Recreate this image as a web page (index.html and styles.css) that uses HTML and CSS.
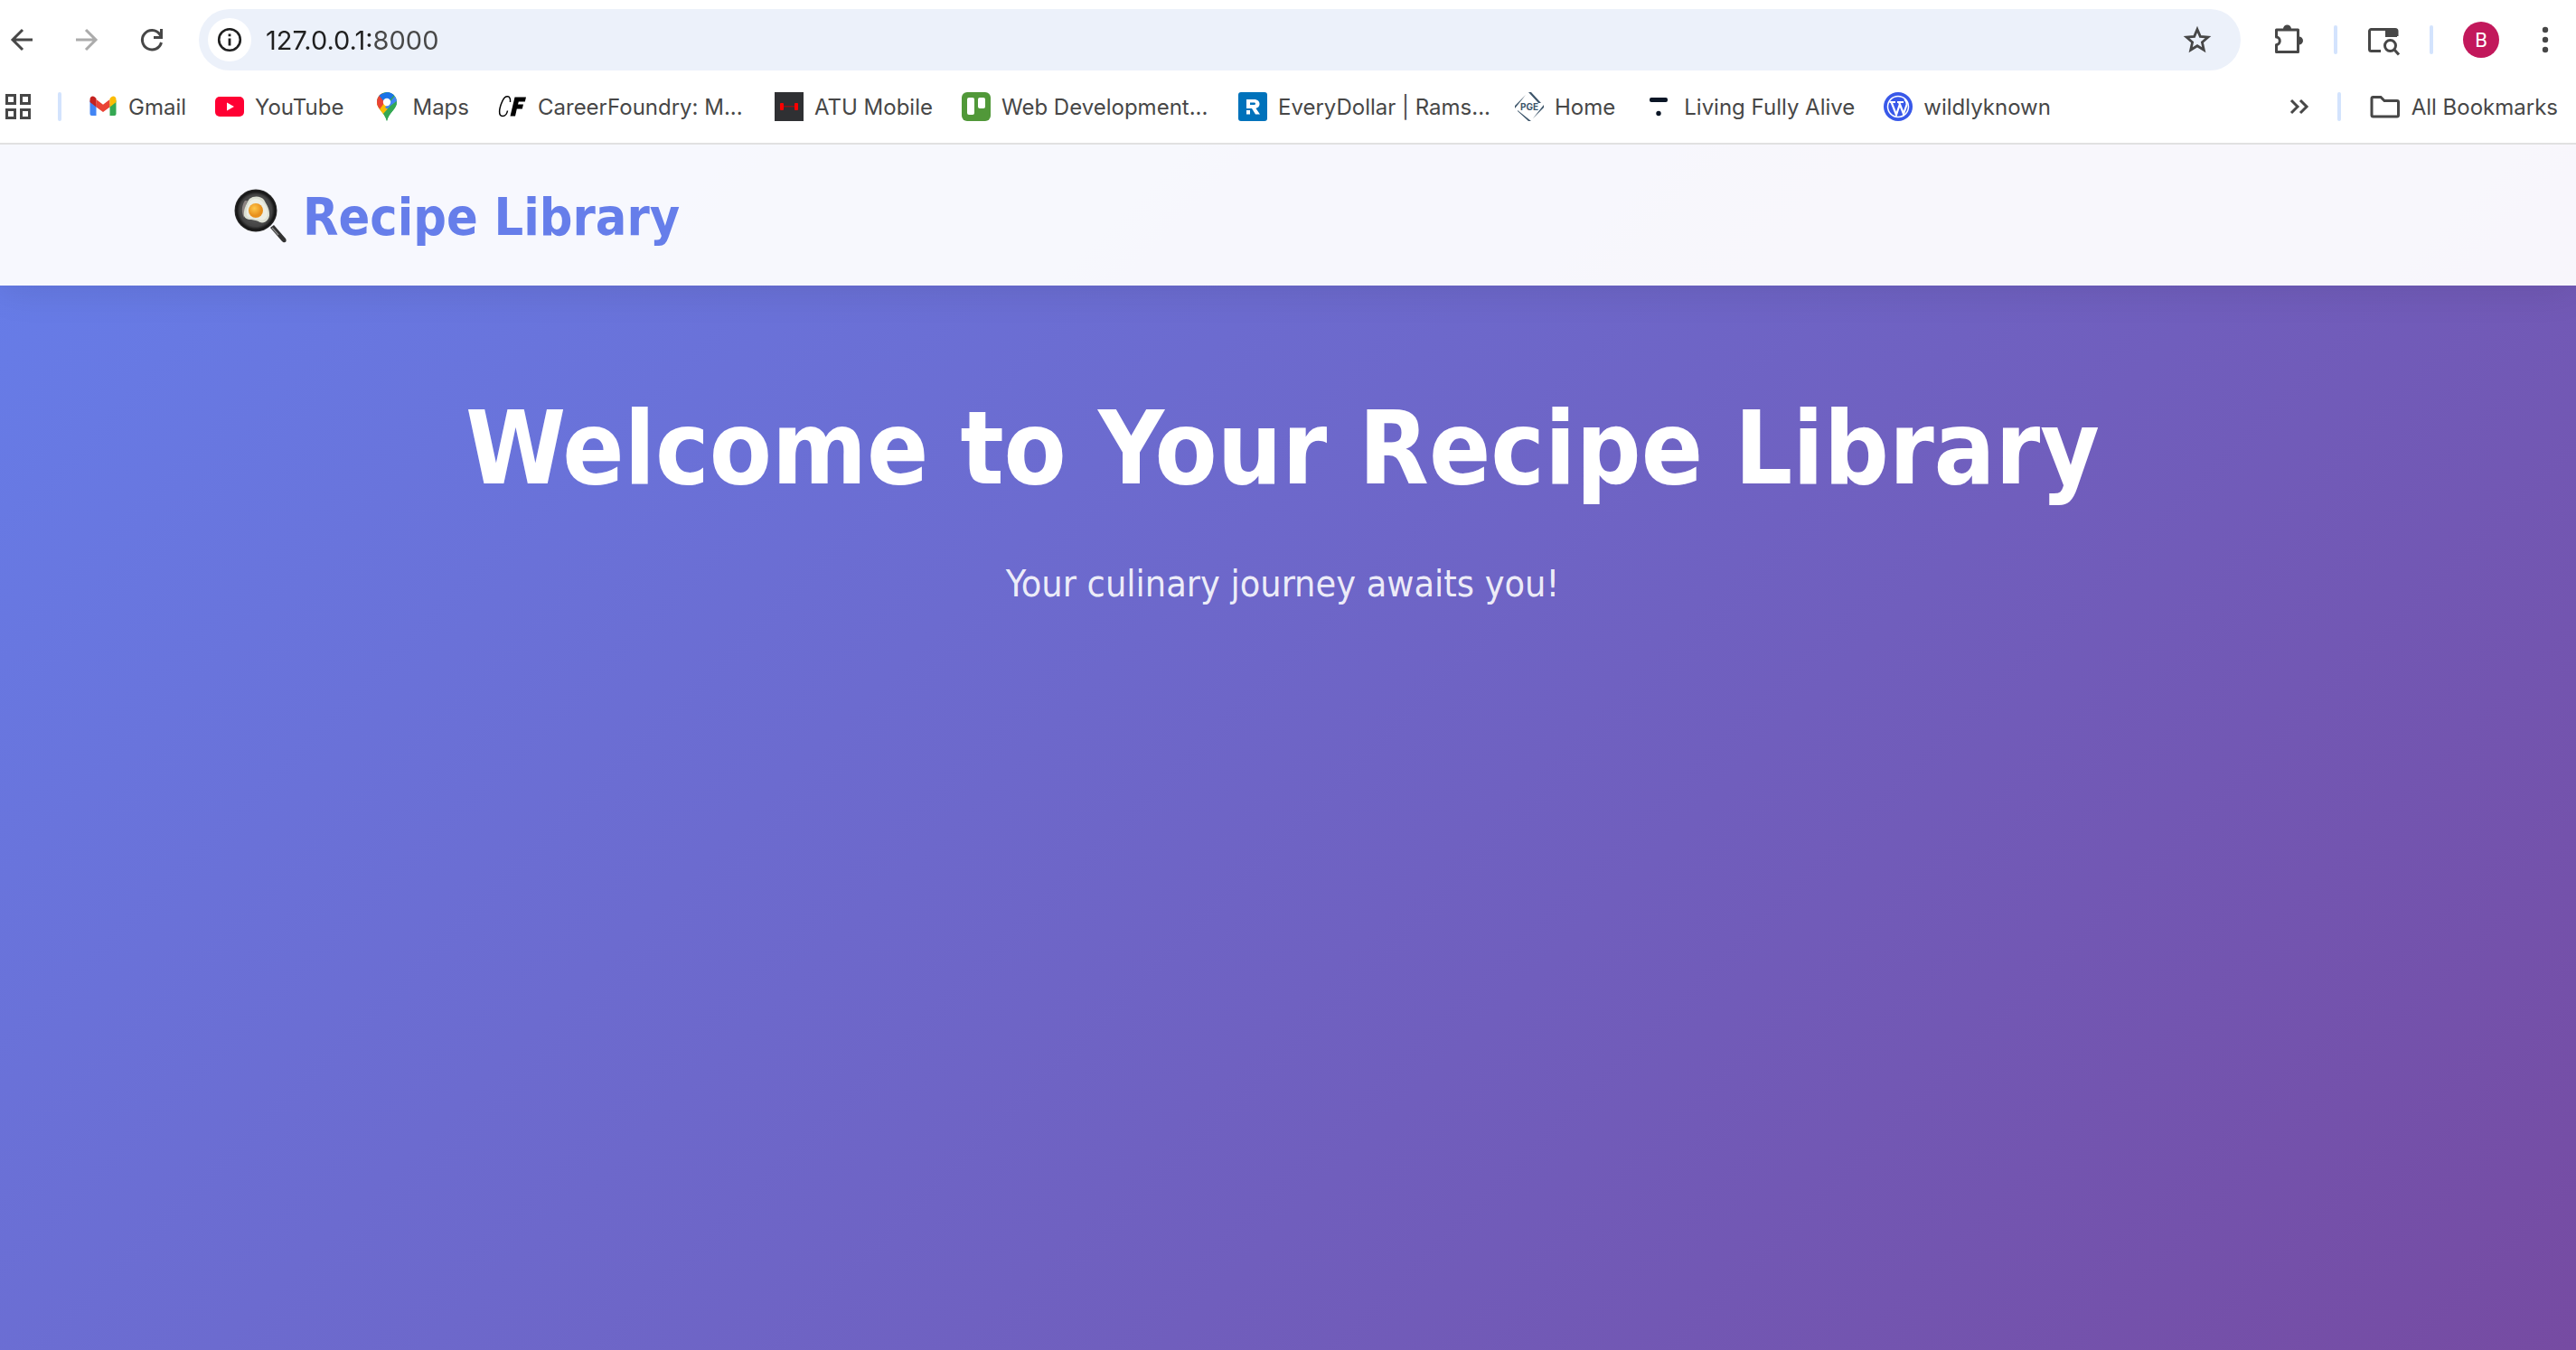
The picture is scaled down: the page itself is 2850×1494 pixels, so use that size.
FILE: index.html
```html
<!DOCTYPE html>
<html lang="en">
<head>
<meta charset="utf-8">
<title>Recipe Library</title>
<link rel="stylesheet" href="styles.css">
</head>
<body>
<div class="browser">
  <div class="toolbar">
    <div class="nav-buttons">
      <button class="icon-button" aria-label="Back"><svg width="32" height="32" viewBox="0 0 32 32" fill="none" stroke="#474747" stroke-width="3"><path d="M28 16H6M17 5 6 16l11 11"/></svg></button>
      <button class="icon-button" aria-label="Forward"><svg width="32" height="32" viewBox="0 0 32 32" fill="none" stroke="#ababab" stroke-width="3"><path d="M4 16h22M15 5l11 11-11 11"/></svg></button>
      <button class="icon-button" aria-label="Reload"><svg width="32" height="32" viewBox="0 0 32 32" fill="none" stroke="#474747" stroke-width="3"><path d="M26.5 19A10.700 10.700 0 1 1 24.800 10L26 12"/><path d="M26.500 4v9.500H18"/></svg></button>
    </div>
    <form class="omnibox">
      <button type="button" class="site-info" aria-label="View site information"><svg width="28" height="28" viewBox="0 0 28 28"><circle cx="14" cy="14" r="11.800" fill="none" stroke="#1f1f1f" stroke-width="2.600"/><path d="M12.600 12.500h2.800v8h-2.800zM12.600 7.500h2.800v2.800h-2.800z" fill="#1f1f1f"/></svg></button>
      <input class="address" type="text" value="127.0.0.1:8000" aria-label="Address">
      <button type="button" class="icon-button" aria-label="Bookmark this tab"><svg width="32" height="32" viewBox="0 0 32 32" fill="none" stroke="#474747" stroke-width="2.800"><path d="m16 4.500 3.300 7.900 8.600.8-6.500 5.600 1.900 8.400L16 22.700l-7.300 4.500 1.900-8.400-6.500-5.600 8.600-.8z"/></svg></button>
    </form>
    <div class="actions">
      <button class="icon-button" aria-label="Extensions"><svg width="36" height="36" viewBox="0 0 36 36"><path d="M5.500 7h24v24.500h-24v-8c5 0 5-8.500 0-8.500z" fill="none" stroke="#474747" stroke-width="3" stroke-linejoin="round"/><path d="M13 6a4.500 4.500 0 0 1 9 0zM30.500 14.500a4.500 4.500 0 0 1 0 9z" fill="#474747"/></svg></button>
      <span class="divider"></span>
      <button class="icon-button" aria-label="Search side panel"><svg width="36" height="36" viewBox="0 0 36 36" fill="none" stroke="#474747" stroke-width="3"><path d="M15 30.500H4.500a2 2 0 0 1-2-2V8.500a2 2 0 0 1 2-2H31a2 2 0 0 1 2 2V14"/><path d="M20 6h13v9H20z" fill="#474747" stroke="none"/><circle cx="25.500" cy="24.500" r="6"/><path d="m30 29 5 5.500"/></svg></button>
      <span class="divider"></span>
      <button class="avatar" aria-label="Profile">B</button>
      <button class="icon-button menu" aria-label="Menu"><svg width="8" height="32" viewBox="0 0 8 32" fill="#474747"><circle cx="4" cy="5" r="3.200"/><circle cx="4" cy="16" r="3.200"/><circle cx="4" cy="27" r="3.200"/></svg></button>
    </div>
  </div>
  <nav class="bookmarks" aria-label="Bookmarks">
    <button class="icon-button" aria-label="Apps"><svg width="28" height="28" viewBox="0 0 28 28" fill="none" stroke="#474747" stroke-width="3"><path d="M1.500 1.500h9v9h-9zM17.500 1.500h9v9h-9zM1.500 17.500h9v9h-9zM17.500 17.500h9v9h-9z"/></svg></button>
    <span class="divider"></span>
    <div class="bookmark-list">
      <a class="bookmark" href="#"><svg width="32" height="32" viewBox="0 0 32 32"><path d="M1.500 9v15a2 2 0 0 0 2 2h5V13z" fill="#4285f4"/><path d="M30.500 9v15a2 2 0 0 1-2 2h-5V13z" fill="#34a853"/><path d="M8.500 8 16 13.800 23.500 8v8.500L16 22l-7.500-5.500z" fill="#ea4335"/><path d="M1.500 11V8c0-3 3-4.500 5.500-2.500L8.500 7v9.500z" fill="#c5221f"/><path d="M30.500 11V8c0-3-3-4.500-5.500-2.500L23.500 7v9.500z" fill="#fbbc04"/></svg><span>Gmail</span></a>
      <a class="bookmark" href="#"><svg width="32" height="32" viewBox="0 0 32 32"><rect y="5" width="32" height="22" rx="5" fill="#ff0033"/><path d="m13 11.500 8 4.500-8 4.500z" fill="#fff"/></svg><span>YouTube</span></a>
      <a class="bookmark" href="#"><svg width="32" height="32" viewBox="0 0 32 32"><defs><clipPath id="pin"><path d="M16 0c6.500 0 11 5 11 11 0 8-8 10-11 21C13 21 5 19 5 11 5 5 9.500 0 16 0z"/></clipPath></defs><g clip-path="url(#pin)"><path d="M0 0h32v32H0z" fill="#34a853"/><path d="M0 10h14l6 5L7 30H0z" fill="#fbbc04"/><path d="M4 14V0h6l6 8-8 11z" fill="#ea4335"/><path d="M7 3 16 0h11l-9 10-4 2z" fill="#1a73e8"/><path d="m14 17 12-14 3 7-9 12z" fill="#4285f4"/><path d="m12 17 7 2-9 11-4-8z" fill="#fbbc04"/><path d="m20 15 8-6v8L16 33l-5-8z" fill="#34a853"/></g><circle cx="16" cy="11" r="4.200" fill="#fff"/></svg><span>Maps</span></a>
      <a class="bookmark" href="#"><svg width="32" height="32" viewBox="0 0 32 32"><path d="M13.500 11c1-8-5.500-8-8.500-1.500C1 18 0 26.500 5 26.500c3.500 0 5-3 5.500-6" fill="none" stroke="#000" stroke-width="1.500"/><path d="M18.500 5.500H31l-1.200 5h-7l-.8 3h6l-1.200 5h-6L19 26.500h-5.500z"/></svg><span class="clipped">CareerFoundry: M...</span></a>
      <a class="bookmark" href="#"><svg width="32" height="32" viewBox="0 0 32 32"><path d="M0 0h32v32H0z" fill="#2f3033"/><path d="M8 15h16v1.500H8z" fill="#8e1218"/><rect x="6" y="12" width="4" height="8" rx="1" fill="#f00"/><rect x="22" y="12" width="4" height="8" rx="1" fill="#f00"/></svg><span>ATU Mobile</span></a>
      <a class="bookmark" href="#"><svg width="32" height="32" viewBox="0 0 32 32"><rect width="32" height="32" rx="6" fill="#519839"/><rect x="6" y="6" width="8" height="19" rx="2" fill="#fff"/><rect x="18" y="6" width="8" height="12" rx="2" fill="#fff"/></svg><span class="clipped">Web Development...</span></a>
      <a class="bookmark" href="#"><svg width="32" height="32" viewBox="0 0 32 32"><rect width="32" height="32" rx="3" fill="#0072bb"/><path d="M9 8h8.500c8 0 8 10 .5 10H9v-4h8.500c2 0 2-2.500 0-2.500H13V17H9zM9 20h4v4.500H9zM15 18h4.500l4.500 6.500h-5z" fill="#fff"/></svg><span class="clipped">EveryDollar | Rams...</span></a>
      <a class="bookmark" href="#"><svg width="32" height="32" viewBox="0 0 32 32"><path d="m12 3-12 12v3zM15 0h3l11 12h-3zM32 14v3L20 29zM3 20l15 12h-3L3 21z" fill="#3e566b"/><text x="16" y="20" class="badge-text">PGE</text></svg><span>Home</span></a>
      <a class="bookmark" href="#"><svg width="32" height="32" viewBox="0 0 32 32" fill="#0b1626"><rect x="6" y="6" width="20" height="5" rx="2"/><circle cx="16" cy="23.500" r="2.700"/></svg><span>Living Fully Alive</span></a>
      <a class="bookmark" href="#"><svg width="32" height="32" viewBox="0 0 32 32"><circle cx="16" cy="16" r="16" fill="#3858e9"/><circle cx="16" cy="16" r="11.500" fill="none" stroke="#fff" stroke-width="1.500"/><path d="M6.500 11H13M15 11h7M8.500 11l5.500 14 4-12M17 11l5 13 3.500-10c.8-3-1-4-2-6" fill="none" stroke="#fff" stroke-width="2.200"/></svg><span>wildlyknown</span></a>
    </div>
    <button class="icon-button" aria-label="More bookmarks"><svg width="24" height="24" viewBox="0 0 24 24" fill="none" stroke="#474747" stroke-width="3"><path d="m3 5 7 7-7 7M13 5l7 7-7 7"/></svg></button>
    <span class="divider"></span>
    <a class="bookmark" href="#"><svg width="36" height="32" viewBox="0 0 36 32" fill="none" stroke="#474747" stroke-width="3"><path d="M5.500 5.500H14l4 4h14a1.500 1.500 0 0 1 1.500 1.500v14.500a1.500 1.500 0 0 1-1.500 1.500H5.500A1.500 1.500 0 0 1 4 25.500V7a1.500 1.500 0 0 1 1.500-1.500z"/></svg><span>All Bookmarks</span></a>
  </nav>
</div>
<div class="page">
  <header class="site-header">
    <div class="container">
      <a class="brand" href="#">
        <svg width="60" height="64" viewBox="0 0 60 64"><defs><radialGradient id="pan"><stop offset="0" stop-color="#666"/><stop offset=".75" stop-color="#444"/><stop offset=".9" stop-color="#151515"/><stop offset="1" stop-color="#2b2b2b"/></radialGradient><radialGradient id="yolk" cx=".4" cy=".35"><stop offset="0" stop-color="#ffc84a"/><stop offset="1" stop-color="#e8901c"/></radialGradient></defs><path d="m40 44 4-3 13 15c2 3-1 6-4 3z" fill="#333"/><path d="m42 44 7 8" stroke="#888" stroke-width="1.500"/><circle cx="24" cy="25" r="23.500" fill="url(#pan)"/><path d="M12 14c-4 6-4 13-1 19 1-7 1-13 4-19z" fill="#8d8583"/><path d="M17 12c5-4 13-3 16 1 2 4 6 9 6 15 1 8-7 13-12 9-5-3-14 0-16-6-1-5 2-14 6-19z" fill="#dde0d3"/><path d="M18 14c5-3 11-2 14 2 2 3 5 7 5 12 0 6-5 9-9 7-5-3-13 0-14-5-1-5 1-11 4-16z" fill="#eceee4"/><circle cx="24" cy="25" r="8" fill="url(#yolk)"/></svg>
        <span>Recipe Library</span>
      </a>
    </div>
  </header>
  <main class="hero">
    <h1>Welcome to Your Recipe Library</h1>
    <p>Your culinary journey awaits you!</p>
  </main>
</div>
</body>
</html>
```
FILE: styles.css
```css
* {
  box-sizing: border-box;
}

body {
  display: flex;
  flex-direction: column;
  min-height: 100vh;
  margin: 0;
  font-family: "DejaVu Sans Condensed", "DejaVu Sans", sans-serif;
}

button {
  padding: 0;
  border: 0;
  background: none;
}

a {
  color: inherit;
  text-decoration: none;
}

svg {
  display: block;
  flex: none;
}

.browser {
  position: relative;
  z-index: 1;
  border-bottom: 2px solid #e1e1e1;
  background: #fff;
  color: #474747;
  font-family: Inter, sans-serif;
  font-size: 24px;
}

.toolbar {
  display: flex;
  align-items: center;
  padding: 10px 30px 10px 8px;
}

.nav-buttons {
  display: flex;
  gap: 40px;
  margin-right: 36px;
}

.icon-button {
  display: flex;
  align-items: center;
  justify-content: center;
}

.omnibox {
  display: flex;
  flex: 1;
  align-items: center;
  height: 68px;
  padding: 0 32px 0 10px;
  border-radius: 34px;
  background: #ecf1fa;
}

.site-info {
  display: flex;
  align-items: center;
  justify-content: center;
  width: 48px;
  height: 48px;
  border-radius: 50%;
  background: #fff;
}

/* The host is darker than the port that follows it. */
.address {
  flex: 1;
  min-width: 0;
  margin-left: 16px;
  padding: 0;
  border: 0;
  outline: 0;
  background: linear-gradient(90deg, #1f1f1f 120px, #474747 120px);
  background-clip: text;
  color: transparent;
  caret-color: #1f1f1f;
  font-family: inherit;
  font-size: 29px;
}

.actions {
  display: flex;
  align-items: center;
  margin-left: 34px;
  gap: 33px;
}

.divider {
  width: 4px;
  height: 32px;
  border-radius: 2px;
  background: #d3e3fd;
}

.avatar {
  width: 40px;
  height: 40px;
  border-radius: 50%;
  background: #c2185b;
  color: #fff;
  font-family: Roboto, sans-serif;
  font-size: 22px;
}

.menu {
  margin-left: 14px;
}

.bookmarks {
  display: flex;
  align-items: center;
  height: 70px;
  padding: 0 20px 10px 6px;
}

.bookmarks .divider {
  margin: 0 30px;
}

.bookmark-list {
  display: flex;
  flex: 1;
  gap: 32px;
}

.bookmark {
  display: flex;
  align-items: center;
  gap: 12px;
  white-space: nowrap;
}

.clipped {
  width: 230px;
}

.badge-text {
  fill: #3e566b;
  font-size: 10px;
  font-weight: 700;
  text-anchor: middle;
}

.page {
  display: flex;
  flex: 1;
  flex-direction: column;
  background: linear-gradient(135deg, #667eea 0%, #764ba2 100%);
}

.site-header {
  padding: 42px 12px 38px 0;
  background: rgba(255, 255, 255, 0.95);
  box-shadow: 0 4px 40px rgba(0, 0, 0, 0.1);
}

.container {
  max-width: 2400px;
  margin: 0 auto;
  padding: 0 40px;
}

.brand {
  display: inline-flex;
  align-items: center;
  gap: 16px;
  color: #667eea;
  font-size: 57px;
  font-weight: 700;
  line-height: 76px;
}

.hero {
  padding: 112px 12px 112px 0;
  text-align: center;
}

.hero h1 {
  margin: 0 0 48px;
  color: #fff;
  font-size: 112px;
  line-height: 136px;
}

.hero p {
  margin: 0;
  color: rgba(255, 255, 255, 0.9);
  font-size: 41px;
  line-height: 68px;
}
```
